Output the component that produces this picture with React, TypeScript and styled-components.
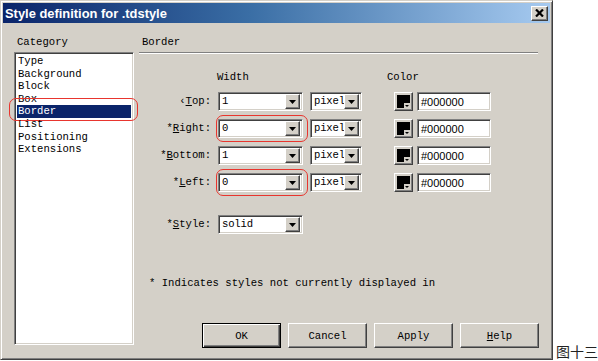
import React from "react";
import styled, { createGlobalStyle, css } from "styled-components";

const FACE = "#d4d0c8";

const GlobalStyle = createGlobalStyle`
  html, body { margin: 0; padding: 0; background: #fff; }
  body { font-family: "Liberation Mono", "DejaVu Sans Mono", monospace; font-size: 10.6px; color: #000; }
  * { box-sizing: border-box; }
`;

const raised = css`
  border: 1px solid;
  border-color: #fff #404040 #404040 #fff;
  box-shadow: inset -1px -1px #808080, inset 1px 1px ${FACE};
  background: ${FACE};
`;

const sunken = css`
  border: 1px solid;
  border-color: #808080 #fff #fff #808080;
  box-shadow: inset 1px 1px #404040, inset -1px -1px ${FACE};
  background: #fff;
`;

const Page = styled.div`
  display: flex;
  align-items: flex-end;
  width: 598px;
  height: 361px;
`;

const Dialog = styled.div`
  width: 553px;
  height: 360px;
  align-self: flex-start;
  background: ${FACE};
  border: 1px solid;
  border-color: ${FACE} #404040 #404040 ${FACE};
  box-shadow: inset 1px 1px #fff, inset -1px -1px #808080;
  padding: 2px;
  display: flex;
  flex-direction: column;
`;

const TitleBar = styled.div`
  height: 20px;
  flex: none;
  display: flex;
  align-items: center;
  justify-content: space-between;
  padding: 0 2px;
  background: linear-gradient(to right, #0a246a 0%, #3a6ea5 45%, #a6caf0 100%);
`;

const TitleText = styled.span`
  font-family: "Liberation Sans", Arial, sans-serif;
  font-weight: bold;
  font-size: 12.9px;
  color: #fff;
`;

const CloseButton = styled.div`
  ${raised};
  width: 17px;
  height: 15px;
  display: flex;
  align-items: center;
  justify-content: center;
`;

const Body = styled.div`
  flex: 1;
  display: flex;
  padding: 13px 0 0 11px;
`;

const LeftCol = styled.div`
  width: 120px;
  display: flex;
  flex-direction: column;
`;

const SectionLabel = styled.div`
  height: 16px;
  line-height: 12px;
  padding-left: 3px;
`;

const ListBox = styled.div`
  ${sunken};
  height: 293px;
  padding: 2px;
  display: flex;
  flex-direction: column;
`;

const ListItem = styled.div<{ $selected?: boolean }>`
  position: relative;
  height: 12.6px;
  line-height: 12.6px;
  padding-left: 1px;
  white-space: nowrap;
  background: ${(p) => (p.$selected ? "#0a246a" : "transparent")};
  color: ${(p) => (p.$selected ? "#fff" : "#000")};
`;

const Ring = styled.span<{ $t: number; $r: number; $b: number; $l: number }>`
  position: absolute;
  top: ${(p) => p.$t}px;
  right: ${(p) => p.$r}px;
  bottom: ${(p) => p.$b}px;
  left: ${(p) => p.$l}px;
  border: 1.5px solid #e8352e;
  border-radius: 7px;
  pointer-events: none;
`;

const RightCol = styled.div`
  width: 399px;
  margin-left: 5px;
  display: flex;
  flex-direction: column;
`;

const Separator = styled.div`
  height: 2px;
  border-top: 1px solid #808080;
  border-bottom: 1px solid #fff;
`;

const FormGrid = styled.div`
  margin-top: 17px;
  display: grid;
  grid-template-columns: 79px 92px 84px 23px 74px;
  grid-template-rows: 13px repeat(4, 19px) 34px;
  row-gap: 8px;
  align-items: end;
`;

const ColHead = styled.div<{ $shift?: number; $span?: number }>`
  line-height: 13px;
  margin-left: ${(p) => p.$shift ?? 0}px;
  grid-column: span ${(p) => p.$span ?? 1};
`;

const FieldLabel = styled.div`
  height: 19px;
  line-height: 19px;
  text-align: right;
  padding-right: 7px;
  white-space: nowrap;
  u { text-decoration: underline; text-underline-offset: 1px; }
`;

const Spacer = styled.div``;

const ComboWrap = styled.div<{ $w: number }>`
  position: relative;
  width: ${(p) => p.$w}px;
  height: 19px;
`;

const ComboBox = styled.div`
  ${sunken};
  width: 100%;
  height: 100%;
  padding: 2px;
  display: flex;
  align-items: center;
`;

const ComboText = styled.span`
  flex: 1;
  min-width: 0;
  padding-left: 1px;
  line-height: 13px;
  white-space: nowrap;
  letter-spacing: -0.2px;
`;

const DropButton = styled.div`
  ${raised};
  width: 15px;
  height: 15px;
  flex: none;
  display: flex;
  align-items: center;
  justify-content: center;
`;

const Swatch = styled.div`
  ${raised};
  width: 19px;
  height: 19px;
  position: relative;
  padding: 2px;
`;

const SwatchInner = styled.div`
  width: 100%;
  height: 100%;
  background: #000;
  position: relative;
`;

const SwatchNotch = styled.div`
  position: absolute;
  right: 0;
  bottom: 0;
  width: 6px;
  height: 5px;
  background: ${FACE};
  display: flex;
  align-items: flex-end;
  justify-content: center;
  padding-bottom: 1px;
`;

const TextField = styled.div`
  ${sunken};
  width: 74px;
  height: 19px;
  padding: 2px 3px;
  font-family: "Liberation Sans", Arial, sans-serif;
  font-size: 11px;
  line-height: 14px;
`;

const Note = styled.div`
  margin-top: 42px;
  padding-left: 10px;
  line-height: 14px;
  white-space: nowrap;
`;

const ButtonRow = styled.div`
  margin-top: 33px;
  margin-left: 63px;
  display: flex;
  gap: 7px;
`;

const PushButton = styled.div<{ $default?: boolean }>`
  width: 79px;
  height: 25px;
  flex: none;
  display: flex;
  align-items: center;
  justify-content: center;
  background: ${FACE};
  ${(p) =>
    p.$default
      ? css`
          border: 1px solid #000;
          box-shadow: inset 1px 1px #fff, inset -1px -1px #404040, inset -2px -2px #808080;
        `
      : raised};
  u { text-decoration: underline; text-underline-offset: 1px; }
`;

const Caption = styled.div`
  margin-left: 3px;
  padding-bottom: 2px;
  font-family: "Noto Sans CJK SC", sans-serif;
  font-size: 14px;
  line-height: 16px;
  color: #222;
  white-space: nowrap;
`;

const Arrow = () => (
  <svg width="7" height="4" viewBox="0 0 7 4">
    <path d="M0 0h7L3.5 4z" fill="#000" />
  </svg>
);

const Combo = ({ w, value, ring }: { w: number; value: string; ring?: boolean }) => (
  <ComboWrap $w={w}>
    <ComboBox>
      <ComboText>{value}</ComboText>
      <DropButton>
        <Arrow />
      </DropButton>
    </ComboBox>
    {ring && <Ring $t={-4} $r={-5} $b={-4} $l={-2} />}
  </ComboWrap>
);

const ColorSwatch = () => (
  <Swatch>
    <SwatchInner>
      <SwatchNotch>
        <svg width="4" height="2" viewBox="0 0 4 2">
          <path d="M0 0h4L2 2z" fill="#000" />
        </svg>
      </SwatchNotch>
    </SwatchInner>
  </Swatch>
);

const categories = ["Type", "Background", "Block", "Box", "Border", "List", "Positioning", "Extensions"];

const rows: { label: React.ReactNode; value: string; ring?: boolean }[] = [
  { label: <>‹<u>T</u>op:</>, value: "1" },
  { label: <>*<u>R</u>ight:</>, value: "0", ring: true },
  { label: <>*<u>B</u>ottom:</>, value: "1" },
  { label: <>*<u>L</u>eft:</>, value: "0", ring: true },
];

export default function App() {
  return (
    <>
      <GlobalStyle />
      <Page>
        <Dialog>
          <TitleBar>
            <TitleText>Style definition for .tdstyle</TitleText>
            <CloseButton>
              <svg width="9" height="8" viewBox="0 0 9 8">
                <path d="M1 0.5L8 7.5M8 0.5L1 7.5" stroke="#000" strokeWidth="2.2" />
              </svg>
            </CloseButton>
          </TitleBar>
          <Body>
            <LeftCol>
              <SectionLabel>Category</SectionLabel>
              <ListBox>
                {categories.map((c) => (
                  <ListItem key={c} $selected={c === "Border"}>
                    {c}
                    {c === "Border" && <Ring $t={-7} $r={-7} $b={-3} $l={-8} />}
                  </ListItem>
                ))}
              </ListBox>
            </LeftCol>
            <RightCol>
              <SectionLabel>Border</SectionLabel>
              <Separator />
              <FormGrid>
                <Spacer />
                <ColHead $shift={-1}>Width</ColHead>
                <Spacer />
                <ColHead $shift={-7} $span={2}>Color</ColHead>
                {rows.map((r, i) => (
                  <React.Fragment key={i}>
                    <FieldLabel>{r.label}</FieldLabel>
                    <Combo w={85} value={r.value} ring={r.ring} />
                    <Combo w={52} value="pixel" />
                    <ColorSwatch />
                    <TextField>#000000</TextField>
                  </React.Fragment>
                ))}
                <FieldLabel>
                  *<u>S</u>tyle:
                </FieldLabel>
                <Combo w={85} value="solid" />
              </FormGrid>
              <Note>* Indicates styles not currently displayed in</Note>
              <ButtonRow>
                <PushButton $default>OK</PushButton>
                <PushButton>Cancel</PushButton>
                <PushButton>Apply</PushButton>
                <PushButton>
                  <u>H</u>elp
                </PushButton>
              </ButtonRow>
            </RightCol>
          </Body>
        </Dialog>
        <Caption>图十三</Caption>
      </Page>
    </>
  );
}
